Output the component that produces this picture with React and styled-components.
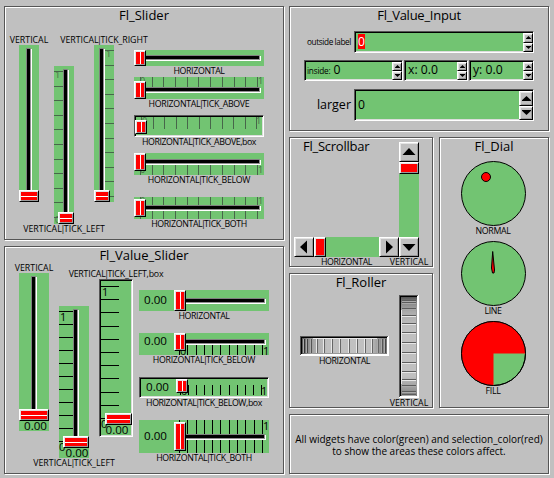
import React from "react";
import styled, { createGlobalStyle, css } from "styled-components";

const GREEN = "#72c472";
const GREY = "#c0c0c0";
const DARK = "#555555";
const RED = "#ff0000";

const GlobalStyle = createGlobalStyle`
  * { box-sizing: border-box; }
  body {
    margin: 0;
    background: ${GREY};
    color: #000;
    font-family: "Open Sans", "Noto Sans", sans-serif;
    overflow: hidden;
  }
  svg { display: block; }
`;

const Window = styled.main`
  width: 554px;
  height: 478px;
  padding: 6px 0 0 4px;
  display: flex;
  gap: 5px;
`;

const Column = styled.div`
  display: flex;
  flex-direction: column;
  flex: none;
  width: ${(p) => p.$w}px;
  gap: ${(p) => p.$gap || 6}px;
`;

const Columns = styled.div`
  display: flex;
  gap: 6px;
`;

const Panel = styled.section`
  height: ${(p) => p.$h}px;
  border: 1px solid ${DARK};
  box-shadow: 1px 1px 0 #fff, inset 1px 1px 0 #fff;
`;

const Title = styled.h2`
  margin: 0;
  padding-left: ${(p) => p.$left || 0}px;
  height: 17px;
  font-size: 13px;
  font-weight: 400;
  line-height: 17px;
  letter-spacing: ${(p) => p.$ls || 0}px;
  text-align: ${(p) => (p.$left ? "left" : "center")};
`;

const Row = styled.div`
  display: flex;
  align-items: flex-start;
  padding-left: 14px;
`;

const Stack = styled.div`
  display: flex;
  flex-direction: column;
  margin: ${(p) => p.$m};
`;

const Widget = styled.div`
  display: flex;
  flex: none;
  flex-direction: column;
  align-items: center;
  width: ${(p) => p.$w}px;
  margin: ${(p) => p.$m || 0};
`;

const LabelText = styled.span`
  flex: none;
  height: 10px;
  line-height: 10px;
  font-size: 8.8px;
  letter-spacing: ${(p) => p.$ls || 0}px;
  white-space: nowrap;
`;

const Pipe = styled.span`
  margin: 0 -1.4px;
`;

function Label({ ls, children }) {
  const [head, tail] = children.split("|");
  return (
    <LabelText $ls={ls}>
      {head}
      {tail && <><Pipe>|</Pipe>{tail}</>}
    </LabelText>
  );
}

const raised = css`
  border: 1px solid;
  border-color: #fff #000 #000 #fff;
  box-shadow: inset 1px 1px 0 #e4e4e4, inset -1px -1px 0 #999;
`;

const sunken = css`
  border: 1px solid;
  border-color: ${DARK} #fff #fff ${DARK};
  box-shadow: inset 1px 1px 0 #000, inset -1px -1px 0 #dcdcdc;
`;

const Track = styled.div`
  position: relative;
  flex: none;
  width: ${(p) => p.$w}px;
  height: ${(p) => p.$h}px;
  background: ${GREEN};
  ${(p) => p.$box && sunken}
`;

const overlay = css`
  position: absolute;
  left: ${(p) => p.$r[0]}px;
  top: ${(p) => p.$r[1]}px;
  width: ${(p) => p.$r[2]}px;
  height: ${(p) => p.$r[3]}px;
`;

const Groove = styled.div`
  ${overlay}
  background: #000;
  border: 1px solid;
  border-color: #808080 #909090 #909090 #808080;
  box-shadow: 1px 1px 0 #fff;
`;

const Thumb = styled.div`
  ${overlay}
  ${raised}
  background: #fff;
  padding: 1px;
  display: flex;
  flex-direction: ${(p) => (p.$vertical ? "column" : "row")};
  gap: 1px;

  &::before, &::after {
    content: "";
    flex: 1;
    background: ${RED};
  }
`;

const TickBar = styled.div`
  ${overlay}
  display: flex;
  flex-direction: ${(p) => (p.$vertical ? "column" : "row")};
  justify-content: space-between;
  color: ${(p) => p.$color};

  i {
    flex: none;
    background: currentColor;
    width: ${(p) => (p.$vertical ? "100%" : "1px")};
    height: ${(p) => (p.$vertical ? "1px" : "100%")};
  }
`;

const Mark = styled.span`
  position: absolute;
  left: ${(p) => p.$x}px;
  top: ${(p) => p.$y}px;
  font-size: ${(p) => p.$size}px;
  line-height: 10px;
  color: ${(p) => p.$color};
`;

const Value = styled.span`
  position: absolute;
  left: ${(p) => p.$x}px;
  top: ${(p) => p.$y}px;
  font-size: ${(p) => p.$size || 11.6}px;
  line-height: 14px;
`;

function Ticks({ r, vertical, color }) {
  return (
    <TickBar $r={r} $vertical={vertical} $color={color}>
      {Array.from({ length: 11 }, (_, i) => <i key={i} />)}
    </TickBar>
  );
}

function Slider({ w, h, box, vertical, groove, thumb, ticks = [], marks = [], value, color = "#47664a", markSize = 9 }) {
  return (
    <Track $w={w} $h={h} $box={box}>
      {ticks.map((r, i) => <Ticks key={i} r={r} vertical={vertical} color={color} />)}
      {marks.map(([t, x, y], i) => (
        <Mark key={i} $x={x} $y={y} $size={markSize} $color={color}>{t}</Mark>
      ))}
      {groove && <Groove $r={groove} />}
      <Thumb $r={thumb} $vertical={vertical} />
      {value && <Value $x={value[0]} $y={value[1]}>0.00</Value>}
    </Track>
  );
}

function SliderPanel() {
  return (
    <Panel $h={234}>
      <Title>Fl_Slider</Title>
      <Row>
        <Widget $w={20} $m="11px 0 0">
          <Label>VERTICAL</Label>
          <Slider vertical w={20} h={157} groove={[7, 3, 5, 146]} thumb={[0, 145, 20, 12]} />
        </Widget>
        <Widget $w={20} $m="42px 0 0 15px">
          <Slider vertical w={20} h={158} groove={[9, 3, 5, 146]} thumb={[4, 146, 16, 12]}
            ticks={[[0, 5, 9, 147]]} marks={[["1", 1, 4], ["0", 1, 149]]} />
          <Label>VERTICAL|TICK_LEFT</Label>
        </Widget>
        <Widget $w={20} $m="11px 0 0 20px">
          <Label ls={-0.05}>VERTICAL|TICK_RIGHT</Label>
          <Slider vertical w={20} h={157} groove={[5, 3, 5, 146]} thumb={[0, 145, 16, 12]}
            ticks={[[11, 5, 9, 147]]} marks={[["1", 12, 4]]} />
        </Widget>
        <Stack $m="26px 0 0 20px">
          <Widget $w={130}>
            <Slider w={130} h={16} groove={[8, 5, 118, 5]} thumb={[0, 0, 12, 16]} />
            <Label ls={-0.35}>HORIZONTAL</Label>
          </Widget>
          <Widget $w={130} $m="1px 0 0">
            <Slider w={130} h={22} groove={[8, 10, 118, 5]} thumb={[0, 4, 12, 18]}
              ticks={[[6, 0, 118, 10]]} marks={[["0", 6, -1], ["1", 124, -1]]} />
            <Label ls={-0.3}>HORIZONTAL|TICK_ABOVE</Label>
          </Widget>
          <Widget $w={130} $m="6px 0 0">
            <Slider box w={130} h={22} thumb={[0, 4, 12, 14]}
              ticks={[[6, 1, 116, 12]]} marks={[["0", 7, 0], ["1", 121, 0]]} />
            <Label ls={-0.42}>HORIZONTAL|TICK_ABOVE,box</Label>
          </Widget>
          <Widget $w={130} $m="6px 0 0">
            <Slider w={130} h={22} groove={[8, 6, 118, 5]} thumb={[0, 0, 12, 18]}
              ticks={[[6, 12, 118, 10]]} marks={[["0", 6, 12], ["1", 124, 12]]} />
            <Label ls={-0.32}>HORIZONTAL|TICK_BELOW</Label>
          </Widget>
          <Widget $w={130} $m="12px 0 0">
            <Slider w={130} h={22} groove={[8, 8, 118, 5]} thumb={[0, 2, 12, 18]}
              ticks={[[6, 0, 118, 8], [6, 14, 118, 8]]} marks={[["0", 6, -1], ["1", 124, -1]]} />
            <Label ls={-0.35}>HORIZONTAL|TICK_BOTH</Label>
          </Widget>
        </Stack>
      </Row>
    </Panel>
  );
}

function ValueSliderPanel() {
  const black = { color: "#000", markSize: 11 };
  return (
    <Panel $h={228}>
      <Title>Fl_Value_Slider</Title>
      <Row>
        <Widget $w={30} $m="-1px 0 0">
          <Label>VERTICAL</Label>
          <Slider {...black} vertical w={30} h={158} groove={[12, 3, 5, 135]} thumb={[0, 136, 30, 12]} value={[5, 146]} />
        </Widget>
        <Widget $w={30} $m="42px 0 0 10px">
          <Slider {...black} vertical w={30} h={152} groove={[14, 3, 5, 129]} thumb={[4, 130, 26, 12]}
            ticks={[[0, 5, 14, 131]]} marks={[["1", 1, 6], ["0", 0, 136]]} value={[6.5, 140]} />
          <Label>VERTICAL|TICK_LEFT</Label>
        </Widget>
        <Widget $w={34} $m="5px 0 0 10px">
          <Label ls={-0.2}>VERTICAL|TICK_LEFT,box</Label>
          <Slider {...black} box vertical w={34} h={158} thumb={[5, 133, 27, 12]}
            ticks={[[1, 6, 18, 133]]} marks={[["1", 2, 7], ["0", 1, 139]]} value={[5.5, 143]} />
        </Widget>
        <Stack $m="26px 0 0 6px">
          <Widget $w={130}>
            <Slider w={130} h={21} groove={[42, 8, 84, 5]} thumb={[35, 0, 12, 21]} value={[5, 3]} />
            <Label ls={-0.35}>HORIZONTAL</Label>
          </Widget>
          <Widget $w={130} $m="12px 0 0">
            <Slider {...black} w={130} h={22} groove={[42, 6, 84, 5]} thumb={[35, 0, 12, 18]} value={[5, 1]}
              ticks={[[40, 12, 84, 10]]} marks={[["0", 41, 13], ["1", 124, 13]]} />
            <Label ls={-0.32}>HORIZONTAL|TICK_BELOW</Label>
          </Widget>
          <Widget $w={130} $m="12px 0 0">
            <Slider {...black} box w={130} h={21} thumb={[36, 1, 12, 14]} value={[6, 2]}
              ticks={[[40, 7, 82, 10]]} marks={[["0", 41, 8], ["1", 121, 8]]} />
            <Label ls={-0.43}>HORIZONTAL|TICK_BELOW,box</Label>
          </Widget>
          <Widget $w={130} $m="12px 0 0">
            <Slider {...black} w={130} h={33} groove={[42, 14, 84, 5]} thumb={[35, 2, 12, 29]} value={[5, 9]}
              ticks={[[40, 0, 84, 14], [40, 20, 84, 13]]} marks={[["0", 41, 1], ["1", 124, 1]]} />
            <Label ls={-0.35}>HORIZONTAL|TICK_BOTH</Label>
          </Widget>
        </Stack>
      </Row>
    </Panel>
  );
}

const InputRow = styled.div`
  display: flex;
  align-items: center;
  justify-content: flex-end;
  height: ${(p) => p.$h}px;
  margin: ${(p) => p.$mt}px 14px 0 0;
  gap: 1px;
`;

const InputLabel = styled.label`
  font-size: ${(p) => p.$size}px;
  line-height: 16px;
  margin-right: ${(p) => p.$mr || 0}px;
  letter-spacing: ${(p) => p.$ls || 0}px;
  white-space: nowrap;
`;

const Field = styled.div`
  ${sunken}
  display: flex;
  align-items: center;
  width: ${(p) => p.$w}px;
  height: 100%;
  padding-left: ${(p) => p.$pl || 3}px;
  background: ${GREEN};
  font-size: 12.2px;
  line-height: 15px;
`;

const FieldText = styled.span`
  height: 15px;
  margin-bottom: 2px;
  line-height: 15px;
  background: ${(p) => (p.$selected ? RED : "transparent")};
  color: ${(p) => (p.$selected ? "#fff" : "#000")};
`;

const Spinner = styled.div`
  display: flex;
  flex-direction: column;
  align-self: stretch;
  width: ${(p) => p.$w}px;
  margin: 1px 0 0 auto;
`;

const Button = styled.div`
  ${raised}
  flex: ${(p) => (p.$size ? "none" : "1")};
  width: ${(p) => (p.$size ? `${p.$size}px` : "auto")};
  height: ${(p) => (p.$size ? `${p.$size}px` : "auto")};
  display: flex;
  align-items: center;
  justify-content: center;
  background: ${GREY};
`;

const ARROWS = {
  up: "M0 5 5 0 10 5V6H0Z",
  down: "M0 1V0H10V1L5 6Z",
};

function SmallArrow({ dir, w, h }) {
  return (
    <svg width={w} height={h} viewBox="0 0 10 6" preserveAspectRatio="none">
      <path d={ARROWS[dir]} />
    </svg>
  );
}

function Spin({ large }) {
  const size = large ? [9, 5] : [5, 3];
  return (
    <Spinner $w={large ? 14 : 10}>
      <Button><SmallArrow dir="up" w={size[0]} h={size[1]} /></Button>
      <Button><SmallArrow dir="down" w={size[0]} h={size[1]} /></Button>
    </Spinner>
  );
}

function InputPanel() {
  return (
    <Panel $h={125}>
      <Title $ls={-0.25}>Fl_Value_Input</Title>
      <InputRow $h={22} $mt={7}>
        <InputLabel $size={8.2} $mr={2} $ls={-0.38}>outside label</InputLabel>
        <Field $w={180}><FieldText $selected>0</FieldText><Spin /></Field>
      </InputRow>
      <InputRow $h={21} $mt={7}>
        <Field $w={99} $pl={2}>
          <InputLabel $size={8.2} $mr={3} $ls={-0.2}>inside:</InputLabel>
          <FieldText>0</FieldText><Spin />
        </Field>
        <Field $w={64}><FieldText>x: 0.0</FieldText><Spin /></Field>
        <Field $w={65}><FieldText>y: 0.0</FieldText><Spin /></Field>
      </InputRow>
      <InputRow $h={32} $mt={8}>
        <InputLabel $size={12.5} $mr={2}>larger</InputLabel>
        <Field $w={180}><FieldText>0</FieldText><Spin large /></Field>
      </InputRow>
    </Panel>
  );
}

const ScrollGrid = styled.div`
  display: grid;
  grid-template-columns: 105px 20px;
  grid-template-rows: 115px 10px;
  margin: -13px 0 0 4px;
  align-items: end;
  justify-items: center;
`;

const ScrollTrack = styled.div`
  display: flex;
  flex-direction: ${(p) => (p.$vertical ? "column" : "row")};
  width: ${(p) => (p.$vertical ? 20 : 105)}px;
  height: ${(p) => (p.$vertical ? 115 : 20)}px;
  background: ${GREEN};
`;

const ScrollThumb = styled.div`
  ${raised}
  flex: none;
  width: ${(p) => (p.$vertical ? 20 : 12)}px;
  height: ${(p) => (p.$vertical ? 12 : 20)}px;
  padding: 1px;
  background: ${RED};
  background-clip: content-box;
`;

const Spacer = styled.div`
  flex: 1;
`;

const BIG = {
  up: "M9 5 15.5 12H2.5Z",
  down: "M2.5 6H15.5L9 13Z",
  left: "M5 9 12 2.5V15.5Z",
  right: "M6 2.5 13 9 6 15.5Z",
};

function ScrollButton({ dir }) {
  return (
    <Button $size={20}>
      <svg width="18" height="18"><path d={BIG[dir]} /></svg>
    </Button>
  );
}

function ScrollbarPanel() {
  return (
    <Panel $h={130}>
      <Title $left={13} $ls={-0.25}>Fl_Scrollbar</Title>
      <ScrollGrid>
        <ScrollTrack>
          <ScrollButton dir="left" /><ScrollThumb /><Spacer /><ScrollButton dir="right" />
        </ScrollTrack>
        <ScrollTrack $vertical>
          <ScrollButton dir="up" /><ScrollThumb $vertical /><Spacer /><ScrollButton dir="down" />
        </ScrollTrack>
        <Label ls={-0.35}>HORIZONTAL</Label>
        <Label>VERTICAL</Label>
      </ScrollGrid>
    </Panel>
  );
}

function HorizontalRoller() {
  const ribs = [[4, "#333"], [7, "#444"], [11, "#555"], [17, "#666"], [24, "#666"], [32, "#666"], [40, "#666"],
    [49, "#666"], [57, "#666"], [65, "#666"], [72, "#666"], [78, "#666"], [82, "#555"], [85, "#444"]];
  return (
    <svg width="89" height="20" shapeRendering="crispEdges">
      <defs>
        <linearGradient id="rollH">
          <stop offset="0" stopColor="#555" /><stop offset=".06" stopColor="#888" />
          <stop offset=".14" stopColor="#a8a8a8" /><stop offset=".3" stopColor="#c0c0c0" />
          <stop offset=".8" stopColor="#c0c0c0" /><stop offset=".93" stopColor="#909090" />
          <stop offset="1" stopColor="#777" />
        </linearGradient>
      </defs>
      <rect width="89" height="20" fill="#fff" />
      <path d="M0 0H88V1H1V19H0Z" fill={DARK} />
      <rect x="1" y="1" width="86" height="17" fill="#000" />
      <rect x="2" y="2" width="85" height="16" fill="url(#rollH)" />
      {ribs.map(([x, c], i) => (
        <g key={x}>
          <rect x={x} y="3" width="1" height="14" fill={c} />
          <rect x={x - 1} y="3" width="1" height="14" fill={i < 3 || i > 10 ? "#aaa" : "#e8e8e8"} />
        </g>
      ))}
      <rect x="13" y="2" width="64" height="1" fill="#e8e8e8" />
      <rect x="13" y="17" width="64" height="1" fill="#999" />
    </svg>
  );
}

function VerticalRoller() {
  const ribs = [5, 7, 13, 20, 28, 37, 47, 57, 67, 76, 84, 90, 96, 99];
  return (
    <svg width="20" height="103" shapeRendering="crispEdges">
      <defs>
        <linearGradient id="rollV" x1="0" y1="0" x2="0" y2="1">
          <stop offset="0" stopColor="#555" /><stop offset=".06" stopColor="#888" />
          <stop offset=".15" stopColor="#aaa" /><stop offset=".3" stopColor="#c0c0c0" />
          <stop offset=".8" stopColor="#c0c0c0" /><stop offset=".93" stopColor="#999" />
          <stop offset="1" stopColor="#777" />
        </linearGradient>
      </defs>
      <rect width="20" height="103" fill="#fff" />
      <path d="M0 0H19V1H1V102H0Z" fill={DARK} />
      <rect x="1" y="1" width="17" height="100" fill="#000" />
      <rect x="2" y="2" width="16" height="99" fill="url(#rollV)" />
      <rect x="2" y="15" width="1" height="74" fill="#e8e8e8" />
      {ribs.map((y, i) => (
        <g key={y}>
          <rect x="3" y={y} width="14" height="1" fill="#5c5c5c" />
          <rect x="3" y={y + 1} width="14" height="1" fill={i < 3 || i > 10 ? "#aaa" : "#e8e8e8"} />
        </g>
      ))}
      <rect x="17" y="15" width="1" height="74" fill="#999" />
    </svg>
  );
}

const RollerRow = styled.div`
  display: flex;
  align-items: flex-start;
  padding-left: 10px;
`;

function RollerPanel() {
  return (
    <Panel $h={135}>
      <Title>Fl_Roller</Title>
      <RollerRow>
        <Widget $w={89} $m="45px 0 0">
          <HorizontalRoller />
          <Label ls={-0.35}>HORIZONTAL</Label>
        </Widget>
        <Widget $w={20} $m="4px 0 0 10px">
          <VerticalRoller />
          <Label>VERTICAL</Label>
        </Widget>
      </RollerRow>
    </Panel>
  );
}

const DialStack = styled.div`
  display: flex;
  flex-direction: column;
  align-items: center;
  margin-top: 6px;
  padding-right: 2px;
  gap: 5px;
`;

function Dial({ label, children }) {
  return (
    <Widget $w={65}>
      <svg width="65" height="65">
        <circle cx="32.5" cy="32.5" r="32" fill={GREEN} stroke="#000" />
        {children}
      </svg>
      <Label ls={-0.35}>{label}</Label>
    </Widget>
  );
}

function DialPanel() {
  return (
    <Panel $h={271}>
      <Title>Fl_Dial</Title>
      <DialStack>
        <Dial label="NORMAL">
          <circle cx="25" cy="16" r="4.5" fill={RED} stroke="#000" />
        </Dial>
        <Dial label="LINE">
          <path d="M31.7 10.5 30.5 27 31.5 32 33 32 33.5 29Z" fill={RED} stroke="#000" />
        </Dial>
        <Dial label="FILL">
          <path d="M32.5 32.5V64.5A32 32 0 1 1 64.5 32.5Z" fill={RED} />
          <circle cx="32.5" cy="32.5" r="32" fill="none" stroke="#000" />
        </Dial>
      </DialStack>
    </Panel>
  );
}

const Note = styled.p`
  margin: 0;
  padding-top: 18px;
  font-size: 10px;
  line-height: 12px;
  text-align: center;
  white-space: nowrap;
`;

export default function App() {
  return (
    <>
      <GlobalStyle />
      <Window>
        <Column $w={280}>
          <SliderPanel />
          <ValueSliderPanel />
        </Column>
        <Column $w={260}>
          <InputPanel />
          <Columns>
            <Column $w={144}>
              <ScrollbarPanel />
              <RollerPanel />
            </Column>
            <Column $w={110}>
              <DialPanel />
            </Column>
          </Columns>
          <Panel $h={60}>
            <Note>
              All widgets have color(green) and selection_color(red)
              <br />
              to show the areas these colors affect.
            </Note>
          </Panel>
        </Column>
      </Window>
    </>
  );
}
